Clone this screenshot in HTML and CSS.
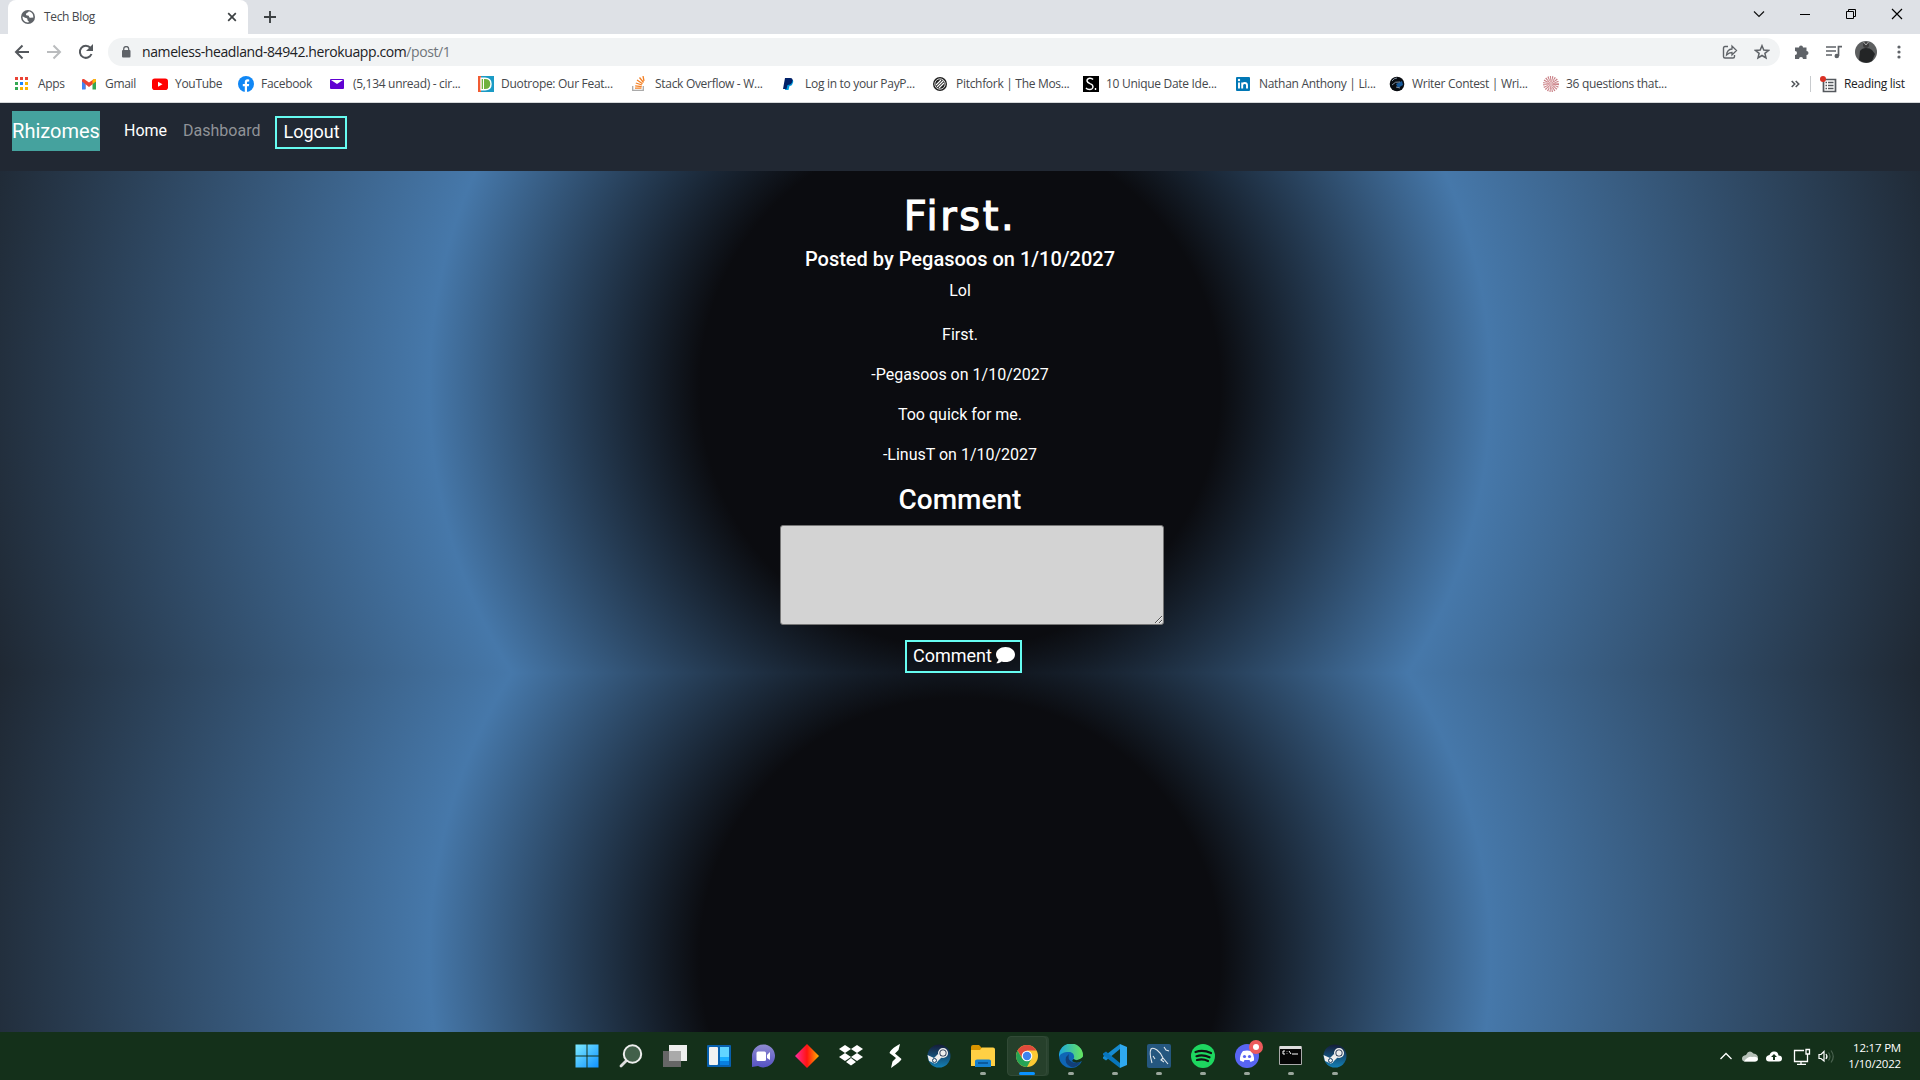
FILE: index.html
```html
<!DOCTYPE html>
<html lang="en">
<head>
<meta charset="utf-8">
<title>Tech Blog</title>
<link rel="stylesheet" href="styles.css">
</head>
<body>
<div class="tabstrip">
  <div class="tab">
    <svg class="globe" width="14" height="14" viewBox="0 0 14 14"><circle cx="7" cy="7" r="7" fill="#5f6368"/><path d="M1.500 6.500C3 6.500 3.500 8 5 8S6.500 9 6.500 10 8 11 8 12.300C4.500 13 1.500 10.500 1.500 6.500ZM7.500 1.500C7.500 3 5 2.500 5 4.500S8 5 8 6.500 10 8 11 7.500 12.300 8.500 12.300 7C12.500 4 10.500 1.500 7.500 1.500Z" fill="#fff"/></svg>
    <span class="tab-title">Tech Blog</span>
    <svg width="10" height="10" viewBox="0 0 10 10"><path d="M1.200 1.200 8.800 8.800M8.800 1.200 1.200 8.800" stroke="#3c4043" stroke-width="1.700"/></svg>
  </div>
  <svg class="newtab" width="12" height="12" viewBox="0 0 12 12"><path d="M6 0V12M0 6H12" stroke="#3c4043" stroke-width="1.900"/></svg>
  <div class="wincontrols">
    <svg width="12" height="12" viewBox="0 0 12 12"><path d="M1 3.500 6 8.500 11 3.500" fill="none" stroke="#111" stroke-width="1.200"/></svg>
    <svg width="12" height="12" viewBox="0 0 12 12"><path d="M1 6.500H11" stroke="#000"/></svg>
    <svg width="12" height="12" viewBox="0 0 12 12"><path d="M1.500 3.500H8.500V10.500H1.500ZM3.500 3.500V1.500H10.500V8.500H8.500" fill="none" stroke="#000"/></svg>
    <svg width="12" height="12" viewBox="0 0 12 12"><path d="M1 1 11 11M11 1 1 11" stroke="#000" stroke-width="1.200"/></svg>
  </div>
</div>
<div class="toolbar">
  <svg class="nav-icon" width="16" height="16" viewBox="0 0 16 16"><path d="M15 8H2M8.500 1.500 2 8 8.500 14.500" fill="none" stroke="#54585d" stroke-width="2"/></svg>
  <svg class="nav-icon" width="16" height="16" viewBox="0 0 16 16"><path d="M1 8H14M7.500 1.500 14 8 7.500 14.500" fill="none" stroke="#babcbe" stroke-width="2"/></svg>
  <svg class="nav-icon" width="16" height="16" viewBox="0 0 16 16"><path d="M13.500 10A6 6 0 1 1 12.500 4L14 5.500" fill="none" stroke="#54585d" stroke-width="2"/><path d="M15 0V7H8Z" fill="#54585d"/></svg>
  <div class="omnibox">
    <svg width="10" height="12" viewBox="0 0 10 12"><rect x="1" y="4" width="8.500" height="7.500" rx="1" fill="#5f6368"/><path d="M2.700 5V3a2.500 2.500 0 0 1 5 0V5" fill="none" stroke="#5f6368" stroke-width="1.300"/></svg>
    <span class="url">nameless-headland-84942.herokuapp.com<i>/post/1</i></span>
    <svg width="16" height="16" viewBox="0 0 16 16"><path d="M6 2.500H3Q1.500 2.500 1.500 4V12.500Q1.500 14 3 14H11Q12.500 14 12.500 12.500V11" fill="none" stroke="#5f6368" stroke-width="1.400"/><path d="M10 2V5Q5 5.500 4.500 11 7 8.500 10 8.500V11L14.500 6.500Z" fill="none" stroke="#5f6368" stroke-width="1.300"/></svg>
    <svg class="star" width="16" height="16" viewBox="0 0 16 16"><path d="M8 1.700 9.800 6 14.500 6.400 10.900 9.400 12 14 8 11.500 4 14 5.100 9.400 1.500 6.400 6.200 6Z" fill="none" stroke="#5f6368" stroke-width="1.500"/></svg>
  </div>
  <svg class="ext" width="16" height="16" viewBox="0 0 16 16"><path d="M1 3.500H5A2 2 0 1 1 9 3.500H12.500V7A2 2 0 1 1 12.500 11V15H9A2 2 0 0 0 5 15H1V11A2 2 0 0 0 1 7Z" fill="#5f6368"/></svg>
  <svg class="media" width="17" height="14" viewBox="0 0 17 14"><path d="M0 2H10M0 6H10M0 10H6" stroke="#5f6368" stroke-width="1.700"/><circle cx="10.800" cy="11" r="2.300" fill="#5f6368"/><path d="M12.500 11V1.700H16" fill="none" stroke="#5f6368" stroke-width="1.700"/></svg>
  <svg class="avatar" width="22" height="22" viewBox="0 0 22 22"><circle cx="11" cy="11" r="11" fill="#5d5f60"/><path d="M4 19 5 10Q7 7 11 7T17 9L20 13 17 20Q11 24 4 19Z" fill="#232526"/><circle cx="11" cy="4" r="3" fill="#3c3c3c"/><path d="M8.500 1 11 4 13.500 1" stroke="#aaa" fill="none"/></svg>
  <svg class="dots" width="4" height="14" viewBox="0 0 4 14"><g fill="#5f6368"><circle cx="2" cy="2" r="1.600"/><circle cx="2" cy="7" r="1.600"/><circle cx="2" cy="12" r="1.600"/></g></svg>
</div>
<div class="bookmarks">
  <div class="bm" style="width:67px"><svg width="16" height="16" viewBox="0 0 16 16"><g fill="#ea4335"><path d="M0 1h3v3H0zM5 1h3v3H5zM10 1h3v3h-3z"/></g><path d="M0 6h3v3H0zM0 11h3v3H0z" fill="#34a853"/><path d="M5 6h3v3H5z" fill="#1a85ff"/><path d="M10 6h3v3h-3zM5 11h3v3H5zM10 11h3v3h-3z" fill="#fbb400"/></svg><span>Apps</span></div>
  <div class="bm" style="width:70px"><svg width="16" height="16" viewBox="0 0 16 16"><path d="M0 4V13H3.500V7L7 10 10.500 7V5L7 8 3 5Z" fill="#ea4335"/><path d="M0 4V13.500H3.500V6Z" fill="#4285f4"/><path d="M10.500 6V13.500H14V4Z" fill="#34a853"/><path d="M0 4Q0 2.500 2 3L7 6.500 12 3Q14 2.500 14 4V5.500L7 11 0 5.500Z" fill="#ea4335"/><path d="M10.500 4 12 3Q14 2.500 14 4V5.500L10.500 8Z" fill="#fbbc04"/></svg><span>Gmail</span></div>
  <div class="bm" style="width:86px"><svg width="16" height="16" viewBox="0 0 16 16"><rect y="2.500" width="16" height="11.500" rx="2.800" fill="#f00"/><path d="M6 5.700V10.700L10.500 8.200Z" fill="#fff"/></svg><span>YouTube</span></div>
  <div class="bm" style="width:92px"><svg width="16" height="16" viewBox="0 0 16 16"><circle cx="8" cy="8" r="8" fill="#1087f5"/><path d="M6.800 16V10.300H4.800V8H6.800V6.300Q6.800 3.300 9.500 3.300L11.200 3.500V5.500H10Q9 5.500 9 6.600V8H11.200L10.800 10.300H9V16Z" fill="#fff"/></svg><span>Facebook</span></div>
  <div class="bm" style="width:148px"><svg width="16" height="16" viewBox="0 0 16 16"><rect y="3" width="14" height="10" rx="1" fill="#6001d2"/><path d="M1 4H13L7 8Z" fill="#fff"/></svg><span>(5,134 unread) - cir...</span></div>
  <div class="bm" style="width:154px"><svg width="16" height="16" viewBox="0 0 16 16"><path d="M0 0H16V16H0Z" fill="#1b9bc5"/><path d="M0 0H3V16H0Z" fill="#f15b32"/><path d="M3 2.200H7Q13 2.200 13 8T7 13.800H3Z" fill="#70b23f" stroke="#fff" stroke-width="1.400"/><path d="M5.500 3V13" stroke="#fff"/></svg><span>Duotrope: Our Feat...</span></div>
  <div class="bm" style="width:150px"><svg width="16" height="16" viewBox="0 0 16 16"><path d="M.700 10V14.300H11.300V10" fill="none" stroke="#aaa" stroke-width="1.300"/><path d="M3 12.200H9.500M3.200 9.800 9.700 10.700M3.800 7 10 9M5 4 10.500 7.800M7.500 1.500 11.500 6.500M11 0 12 5" stroke="#f48024" stroke-width="1.300"/></svg><span>Stack Overflow - W...</span></div>
  <div class="bm" style="width:151px"><svg width="16" height="16" viewBox="0 0 16 16"><path d="M4 4H11Q12 6 10 9 9 10 7.500 10L6.500 14H3Z" fill="#009cde"/><path d="M3 2H8Q12 2 10 6.500 9 9 5.500 9L4.500 13H1Z" fill="#012169"/></svg><span>Log in to your PayP...</span></div>
  <div class="bm" style="width:150px"><svg width="16" height="16" viewBox="0 0 16 16"><circle cx="7" cy="8" r="7" fill="#222"/><circle cx="7" cy="8" r="5.200" fill="none" stroke="#fff" stroke-width=".8"/><path d="M3 9 8 4M4 11 10.500 4.500M6 12 11 7" stroke="#fff" stroke-width="1.100"/></svg><span>Pitchfork | The Mos...</span></div>
  <div class="bm" style="width:153px"><svg width="16" height="16" viewBox="0 0 16 16"><path d="M0 0H16V16H0Z" fill="#000"/><path d="M10 3.500Q9 2 6.500 2.200 3.800 2.600 4 5 4.300 6.600 7 7.600 10 8.600 10 11 9.700 13.500 6.500 13.500 4 13.500 3 12M12.500 12V14" fill="none" stroke="#fff" stroke-width="1.400"/></svg><span>10 Unique Date Ide...</span></div>
  <div class="bm" style="width:153px"><svg width="16" height="16" viewBox="0 0 16 16"><rect y="1" width="14" height="14" rx="1" fill="#0077b5"/><path d="M3 6.500V12.500M6.200 6.500V12.500M6.200 9Q6.500 7 8.700 7T11 9V12.500" fill="none" stroke="#fff" stroke-width="1.900"/><circle cx="3" cy="4" r="1.200" fill="#fff"/></svg><span>Nathan Anthony | Li...</span></div>
  <div class="bm" style="width:154px"><svg width="16" height="16" viewBox="0 0 16 16"><circle cx="8" cy="8" r="7.300" fill="#080b10"/><path d="M7 8 13 5 14 9 9 12Z" fill="#17599a"/><path d="M3 5Q5 2 8 2M3 9Q6 5 11 6M7 11 11 12" stroke="#8492a2" fill="none"/></svg><span>Writer Contest | Wri...</span></div>
  <div class="bm" style="width:248px"><svg width="16" height="16" viewBox="0 0 16 16"><circle cx="8" cy="8" r="6" fill="none" stroke="#c98086" stroke-width="4" stroke-dasharray="1 .9"/><circle cx="8" cy="8" r="2.500" fill="none" stroke="#d08a8f" stroke-width="4" stroke-dasharray=".8 .5"/></svg><span>36 questions that...</span></div>
  <svg class="more" width="9" height="8" viewBox="0 0 9 8"><path d="M.700 1 3.700 4 .700 7M4.700 1 7.700 4 4.700 7" fill="none" stroke="#54585d" stroke-width="1.600"/></svg>
  <div class="reading">
    <svg width="17" height="17" viewBox="0 0 17 17"><path d="M3.500 3.500H15.500V15.500H3.500Z" fill="none" stroke="#54585d" stroke-width="1.700"/><path d="M5.500 6.500H7M8 6.500H13.500M5.500 9.500H7M8 9.500H13.500M5.500 12.500H7M8 12.500H13.500" stroke="#54585d" stroke-width="1.500"/><circle cx="3" cy="3" r="3" fill="#d93025"/></svg>
    <span>Reading list</span>
  </div>
</div>
<div class="page">
  <nav class="navbar">
    <a class="brand">Rhizomes</a><a class="link active">Home</a><a class="link">Dashboard</a><button class="btn logout">Logout</button>
  </nav>
  <main class="post">
    <h1>First.</h1>
    <h4>Posted by Pegasoos on 1/10/2027</h4>
    <p class="body">Lol</p>
    <p>First.</p>
    <p>-Pegasoos on 1/10/2027</p>
    <p>Too quick for me.</p>
    <p>-LinusT on 1/10/2027</p>
    <h3>Comment</h3>
    <textarea></textarea>
    <button class="btn submit">Comment <svg width="19" height="17" viewBox="0 0 19 17"><path d="M9.500 0C4.300 0 0 3.300 0 7.500 0 9.600 1 11.300 2.500 12.700 2.200 14.200.500 15.500.300 16.300 2.500 16.500 4.300 15.400 5.500 14.400 11.500 16.500 19 13.500 19 7.500 19 3.300 14.700 0 9.500 0Z" fill="#fff"/></svg></button>
  </main>
</div>
<footer class="taskbar">
  <div class="apps">
    <div class="app"><svg width="24" height="24" viewBox="0 0 24 24"><defs><linearGradient id="w" x2="1" y2="1"><stop stop-color="#7deaff"/><stop offset="1" stop-color="#0f91ff"/></linearGradient></defs><path d="M.500.500H11.500V11.500H.500ZM12.500.500H23.500V11.500H12.500ZM.500 12.500H11.500V23.500H.500ZM12.500 12.500H23.500V23.500H12.500Z" fill="url(#w)"/></svg></div>
    <div class="app"><svg width="24" height="24" viewBox="0 0 24 24"><path d="M8 16 2 22" stroke="#ddd" stroke-width="2.800" stroke-linecap="round"/><circle cx="13.500" cy="10" r="8.700" fill="#42604a" stroke="#eee" stroke-width="2"/></svg></div>
    <div class="app"><svg width="24" height="24" viewBox="0 0 24 24"><path d="M6 1H24V17H6Z" fill="#eee"/><path d="M0 7H18V23H0Z" fill="#666"/><path d="M6 7H18V17H6Z" fill="#aaa"/></svg></div>
    <div class="app"><svg width="24" height="24" viewBox="0 0 24 24"><rect y="1" width="24" height="22" rx="1" fill="#0860ae"/><rect x="2" y="3" width="9" height="18" rx="1" fill="#f2f2f2"/><path d="M13 3H22V13H13Z" fill="#62d5ff"/><path d="M13 13H22V17H13Z" fill="#1bafff"/><path d="M13 17H22V21H13Z" fill="#087fe0"/></svg></div>
    <div class="app"><svg width="24" height="24" viewBox="0 0 24 24"><defs><linearGradient id="c" y2="1" x2="0"><stop stop-color="#8f8bd0"/><stop offset="1" stop-color="#5552c4"/></linearGradient></defs><path d="M1 23V12A11.500 11.500 0 1 1 7 22Z" fill="url(#c)"/><rect x="5.500" y="7.500" width="9.500" height="9.500" rx="1.500" fill="#fff"/><path d="M16 11 19 8V16L16 14Z" fill="#fff"/></svg></div>
    <div class="app"><svg width="24" height="24" viewBox="0 0 24 24"><defs><linearGradient id="d" x2="1"><stop stop-color="#ff2ba0"/><stop offset=".5" stop-color="#ff1410"/><stop offset="1" stop-color="#ffb300"/></linearGradient></defs><path d="M12 0 24 12 12 24 0 12Z" fill="url(#d)"/></svg></div>
    <div class="app"><svg width="24" height="24" viewBox="0 0 24 24"><path d="M6 1 12 5 6 9 0 5ZM18 1 24 5 18 9 12 5ZM6 9 12 13 6 17 0 13ZM18 9 24 13 18 17 12 13ZM12 14 17 18 12 21.500 7 18Z" fill="#fff"/></svg></div>
    <div class="app"><svg width="24" height="24" viewBox="0 0 24 24"><path d="M17 0C13 2 8 5 6.500 9L13 14 9.500 17.500 8 24C12 21 17 18 18.500 15L12 9.500 15.500 6Z" fill="#fff"/></svg></div>
    <div class="app"><svg width="24" height="24" viewBox="0 0 24 24"><use href="#steam"/></svg></div>
    <div class="app run"><svg width="24" height="24" viewBox="0 0 24 24"><path d="M0 3Q0 1 2 1H8L11 4H22V8H0Z" fill="#d99500"/><path d="M0 6H9L11 3.500H22Q24 3.500 24 5.500V22H0Z" fill="#ffd044"/><path d="M4 23V17Q4 15.500 6 15.500H18Q20 15.500 20 17V23Z" fill="#1580d0"/><path d="M7 19H17" stroke="#0b599c" stroke-width="2"/></svg></div>
    <div class="app run current"><svg width="24" height="24" viewBox="0 0 24 24"><circle cx="12" cy="12" r="11" fill="#fcc934"/><path d="M2.500 6.500A11 11 0 0 1 21.500 6.500H12L7.500 14.500Z" fill="#e04a3c"/><path d="M2.500 6.500A11 11 0 0 0 12 23L16.500 14.500H7.200Z" fill="#25a355"/><circle cx="12" cy="12" r="5.300" fill="#fff"/><circle cx="12" cy="12" r="4.200" fill="#3f83ee"/></svg></div>
    <div class="app run"><svg width="24" height="24" viewBox="0 0 24 24"><defs><linearGradient id="e" x2="1"><stop stop-color="#1ba5df"/><stop offset="1" stop-color="#68e65b"/></linearGradient></defs><circle cx="12" cy="12" r="12" fill="#0f66b5"/><path d="M0 12A12 12 0 0 1 24 11C24 16 18 17 14.500 15 16 13 15 8 10 8 4 8 1 10 0 13Z" fill="url(#e)"/><path d="M10 10Q8 15 13 18 18 20 22 17.500 18 24 12 23 5 20 7 13Z" fill="#123f78"/><path d="M14.500 15Q18 18 24 13V17L22 17.500Q17 20 13 17Z" fill="#14301a"/></svg></div>
    <div class="app run"><svg width="24" height="24" viewBox="0 0 24 24"><path d="M17 5 3 16.500 0 14.500V13L17 0Z" fill="#168bd0"/><path d="M17 19 3 7.500 0 9.500V11L17 24Z" fill="#0876bd"/><path d="M17 0 24 3V21L17 24Z" fill="#2fa9ef"/></svg></div>
    <div class="app run"><svg width="24" height="24" viewBox="0 0 24 24"><rect width="24" height="24" rx="2" fill="#25577f"/><path d="M5 19Q2 9 4 5 6 3 10 6 14 9 16 14L21 20M6 12 8 15M16 14 14 16 17 18M17 3 19 6 22 7" fill="none" stroke="#e2e8ec" stroke-width="1.100"/></svg></div>
    <div class="app run"><svg width="24" height="24" viewBox="0 0 24 24"><circle cx="12" cy="12" r="12" fill="#1ed760"/><path d="M4.500 8Q12 5.500 20 9M5.500 12.200Q12 10.200 18.500 13.300M6 16Q12 14.500 17 17" fill="none" stroke="#111" stroke-width="2.200" stroke-linecap="round"/></svg></div>
    <div class="app run"><svg class="spill" width="24" height="24" viewBox="0 0 24 24"><circle cx="12" cy="12" r="12" fill="#5865f2"/><path d="M8 7Q12 6 16 7 19.500 11 19 16.500L15.500 18 14.500 16H9.500L8.500 18 5 16.500Q4.500 11 8 7Z" fill="#fff"/><circle cx="9.500" cy="12.500" r="1.600" fill="#5865f2"/><circle cx="14.500" cy="12.500" r="1.600" fill="#5865f2"/><circle cx="21" cy="3" r="7" fill="#ed5a5c"/><circle cx="21" cy="3" r="3" fill="#fff"/></svg></div>
    <div class="app run"><svg width="24" height="24" viewBox="0 0 24 24"><path d="M.500 2.500H22.500V20.500H.500Z" fill="#050505" stroke="#aaa"/><path d="M1 2H22V5H1Z" fill="#ddd"/><path d="M6 7H4V10H6M8 7.500V8M8 9.500V10M10 7 12 10M13 10H19" fill="none" stroke="#fff"/></svg></div>
    <div class="app run"><svg width="24" height="24" viewBox="0 0 24 24"><defs><linearGradient id="s" y2="1" x2="0"><stop stop-color="#151c38"/><stop offset="1" stop-color="#137fb5"/></linearGradient></defs><g id="steam"><circle cx="12" cy="12" r="11.500" fill="url(#s)"/><path d="M.500 11 7 14 11 10 15 13 11 17Q9 21 5.500 18.500L2 17Z" fill="#eee"/><circle cx="16" cy="9" r="4.300" fill="#152746" stroke="#eee" stroke-width="1.500"/><circle cx="16" cy="9" r="2.700" fill="#eee"/><circle cx="7.500" cy="16.500" r="2" fill="none" stroke="#153e65"/></g></svg></div>
  </div>
  <div class="tray">
    <svg width="116" height="18" viewBox="0 0 116 18"><path d="M.500 12 6 6.500 11.500 12" fill="none" stroke="#fff" stroke-width="1.300"/><path d="M25 14.500Q22 14.500 22 11.500T26 8Q29 2 33.500 6.500 38 7 38 11 38 14.500 35 14.500Z" fill="#b5c0b7"/><path d="M24 14.500Q28 9 32 10 37 9 38 12 37.500 14.500 35 14.500Z" fill="#fff"/><path d="M49 14.500Q46 14.500 46 11.500T49.500 8Q51 4 54.500 4.500 58 4.500 58.500 8.500 62 8.500 62 11.500 62 14.500 59 14.500Z" fill="#fff"/><path d="M54 7 51 10H53V13H55V10H57Z" fill="#14301a"/><path d="M84 3.500H74.500V14.500H87.500V8M77 17.500H86M81 14.500V17.500M86 2.500H89.500V7H86ZM87.500 7V12" fill="none" stroke="#fff" stroke-width="1.300"/><path d="M99 7.500H101L104 4.500V14L101 11.500H99Z" fill="none" stroke="#fff" stroke-width="1.200"/><path d="M106 7Q108 9.500 106 12" fill="none" stroke="#fff" stroke-width="1.200"/><path d="M108.500 5.500Q111.500 9.500 108.500 13.500M111 3.500Q115.500 9.500 111 15.500" fill="none" stroke="#4b6350" stroke-width="1.200"/></svg>
    <div class="clock"><span>12:17 PM</span><span>1/10/2022</span></div>
  </div>
</footer>
</body>
</html>
```

FILE: styles.css
```css
* { box-sizing: border-box; }
body { margin: 0; width: 1920px; height: 1080px; overflow: hidden; display: flex; flex-direction: column; font-family: "Open Sans", "Noto Sans", sans-serif; font-size: 12px; }
svg { display: block; flex: none; }

.tabstrip { height: 34px; flex: none; background: #dee1e6; display: flex; }
.tab { width: 240px; height: 34px; margin-left: 8px; padding: 0 11px 0 13px; border-radius: 8px 8px 0 0; background: #fff; display: flex; align-items: center; }
.tab-title { flex: 1; margin-left: 9px; padding-bottom: 1px; color: #45484c; letter-spacing: -0.35px; }
.newtab { margin: 11px 0 0 16px; }
.wincontrols { margin: 8px 17px 0 auto; display: flex; gap: 34px; }

.toolbar { height: 36px; flex: none; background: #fff; display: flex; align-items: center; padding-left: 14px; }
.nav-icon { margin-right: 16px; }
.omnibox { width: 1672px; height: 28px; margin-left: -2px; padding: 0 10px 0 13px; border-radius: 14px; background: #f1f3f4; display: flex; align-items: center; }
.url { flex: 1; margin-left: 11px; padding-bottom: 1px; color: #202124; font-size: 14px; letter-spacing: -0.4px; white-space: nowrap; }
.url i { color: #70757a; font-style: normal; }
.star { margin-left: 16px; }
.ext { margin-left: 14px; }
.media { margin-left: 16px; }
.avatar { margin-left: 12px; }
.dots { margin-left: 20px; }

.bookmarks { height: 33px; flex: none; background: #fff; border-bottom: 1px solid #d5d8da; padding: 0 0 4px 15px; display: flex; align-items: center; color: #45484c; }
.bm { flex: none; display: flex; align-items: center; gap: 7px; white-space: nowrap; letter-spacing: -0.3px; }
.bm span, .reading span { padding-bottom: 1px; }
.more { margin-right: 10px; }
.reading { height: 16px; padding-left: 9px; border-left: 1px solid #c8cbce; display: flex; align-items: center; gap: 7px; white-space: nowrap; letter-spacing: -0.3px; color: #202124; }

.page { height: 929px; flex: none; display: flex; flex-direction: column; font-family: Roboto, sans-serif; font-size: 16px; color: #fff; background: radial-gradient(circle, #0b0c10 26%, #4678aa 53%, #1f2833 100%) 0 0 / 1920px 570px; }
.navbar { height: 68px; flex: none; padding: 8px 12px; background: #212833; display: flex; align-items: flex-start; }
.brand { width: 88px; height: 40px; margin-right: 24px; line-height: 40px; text-align: center; background: #45a29e; font-size: 20px; white-space: nowrap; }
.link { line-height: 40px; margin-right: 16px; color: #909398; }
.link.active { color: #fff; }
.btn { height: 33px; padding: 0 6px 2px; border: 2px solid #66fcf1; background: transparent; color: #fff; font-family: inherit; font-size: 18px; line-height: 27px; white-space: nowrap; }
.logout { width: 72px; margin: 5px 0 0 -1px; }
.post { display: flex; flex-direction: column; align-items: center; padding-top: 20px; }
.post h1 { margin: 0; height: 56px; line-height: 50px; font-family: "DejaVu Sans", sans-serif; font-size: 40px; font-weight: 400; letter-spacing: 2.6px; -webkit-text-stroke: 1.2px #fff; }
.post h4 { margin: 0 0 8px; line-height: 24px; font-size: 20px; font-weight: 500; }
.post p { margin: 0 0 16px; line-height: 24px; }
.post .body { margin-bottom: 20px; }
.post h3 { margin: 0 0 8px; line-height: 34px; font-size: 28px; font-weight: 500; }
.post textarea { width: 384px; height: 100px; margin: 0 0 15px 24px; border: 1px solid #767676; border-radius: 3px; background: #d3d3d3; }
.submit { width: 117px; margin-left: 7px; display: flex; align-items: center; gap: 4px; }

.taskbar { height: 48px; flex: none; background: #14301a; display: flex; justify-content: space-between; padding: 0 19px 0 565px; }
.apps { display: flex; }
.app { width: 44px; height: 48px; padding-top: 12px; display: flex; flex-direction: column; align-items: center; }
.run::after { content: ""; width: 6px; height: 3px; margin-top: 4px; border-radius: 2px; background: #9aa69c; }
.current { width: 40px; height: 40px; margin: 4px 2px; padding-top: 7px; border-radius: 4px; background: #26402b; border: 1px solid #314a36; box-shadow: 2px 0 0 #29432f; }
.current::after { width: 16px; background: #0a93ff; }
.spill { overflow: visible; }
.tray { display: flex; align-items: center; color: #fff; }
.clock { width: 62px; margin-left: 3px; display: flex; flex-direction: column; text-align: right; font-size: 11.500px; line-height: 16px; letter-spacing: -0.2px; }
```
